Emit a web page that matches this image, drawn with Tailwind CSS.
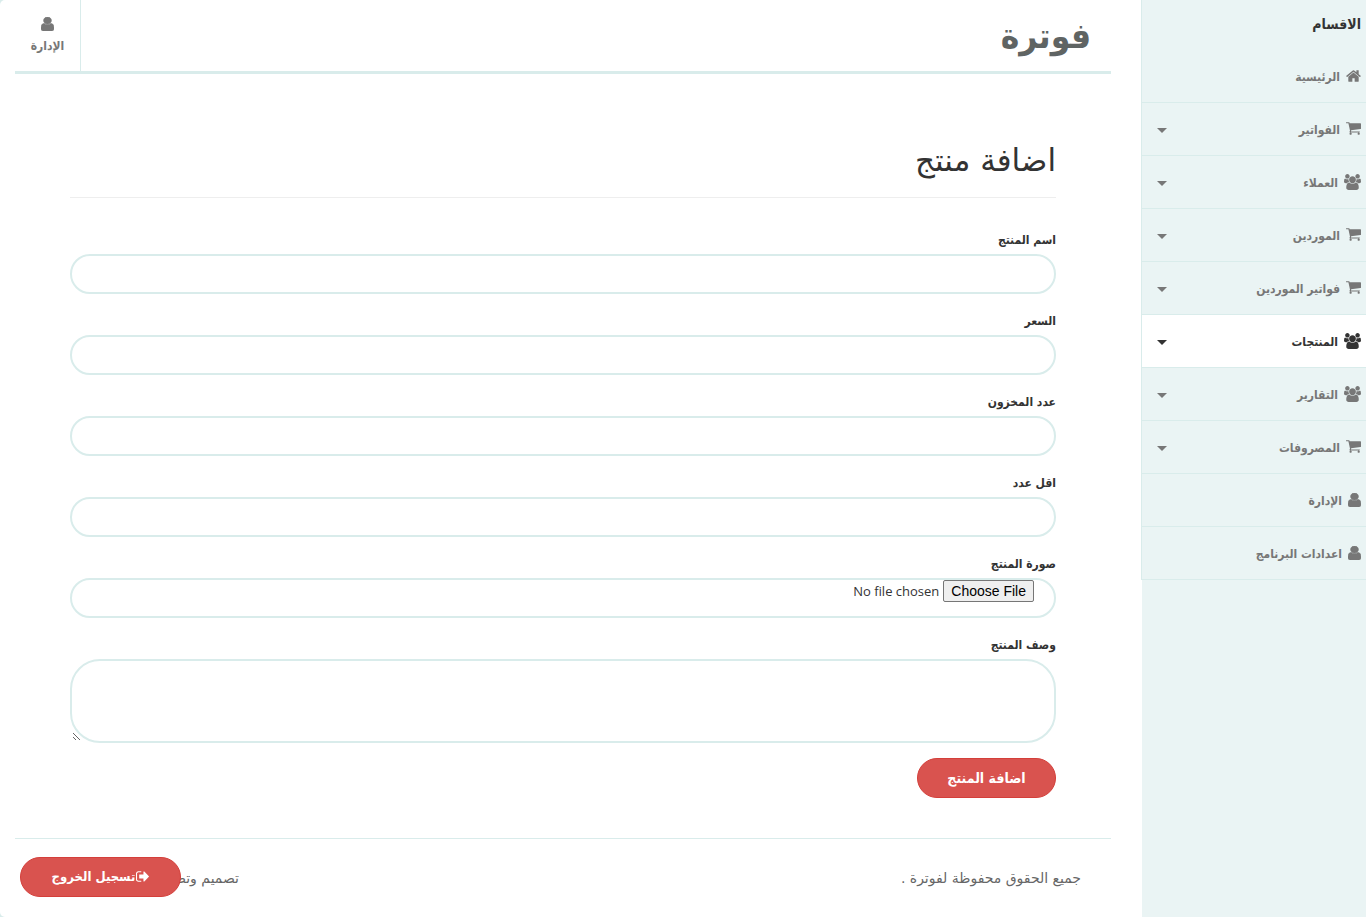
<!DOCTYPE html>
<html lang="ar" dir="rtl">
<head>
  <meta charset="UTF-8" />
  <meta name="viewport" content="width=device-width, initial-scale=1.0"/>
  <title>فوترة</title>
  <script src="https://cdn.jsdelivr.net/npm/@tailwindcss/browser@4"></script>
</head>
<body class="flex min-h-screen bg-[#d9eceb] font-['DejaVu_Sans_Condensed','DejaVu_Sans',sans-serif] text-[#333]">

  <!-- icon shapes shared by the menu and the header -->
  <svg class="hidden">
    <symbol id="home" viewBox="64 253 1664 1283"><path d="M1472 992v480q0 26-19 45t-45 19h-384v-384h-256v384h-384q-26 0-45-19t-19-45v-480q0-1 .5-3t.5-3l575-474 575 474q1 2 1 6zm223-69l-62 74q-8 9-21 11h-3q-13 0-21-7l-692-577-692 577q-12 8-24 7-13-2-21-11l-62-74q-8-10-7-23.5t11-21.5l719-599q32-26 76-26t76 26l244 204v-195q0-14 9-23t23-9h192q14 0 23 9t9 23v408l219 182q10 8 11 21.5t-7 23.5z"/></symbol>
    <symbol id="cart" viewBox="64 256 1664 1408"><path d="M704 1536q0 52-38 90t-90 38-90-38-38-90 38-90 90-38 90 38 38 90zm896 0q0 52-38 90t-90 38-90-38-38-90 38-90 90-38 90 38 38 90zm128-1088v512q0 24-16.5 42.5t-40.5 21.5l-1044 122q13 60 13 70 0 16-24 64h920q26 0 45 19t19 45-19 45-45 19h-1024q-26 0-45-19t-19-45q0-11 8-31.5t16-36 21.5-40 15.5-29.5l-177-823h-204q-26 0-45-19t-19-45 19-45 45-19h256q16 0 28.5 6.5t19.5 15.5 13 24.5 8 26 5.5 29.5 4.5 26h1201q26 0 45 19t19 45z"/></symbol>
    <symbol id="group" viewBox="-64 0 1920 1792"><path d="M529 896q-162 5-265 128h-134q-82 0-138-40.5t-56-118.5q0-353 124-353 6 0 43.5 21t97.5 42.5 119 21.5q67 0 133-23-5 37-5 66 0 139 81 256zm1071 637q0 120-73 189.5t-194 69.5h-874q-121 0-194-69.5t-73-189.5q0-53 3.5-103.5t14-109 26.5-108.5 43-97.5 62-81 85.5-53.5 111.5-20q10 0 43 21.5t73 48 107 48 135 21.5 135-21.5 107-48 73-48 43-21.5q61 0 111.5 20t85.5 53.5 62 81 43 97.5 26.5 108.5 14 109 3.5 103.5zm-1024-1277q0 106-75 181t-181 75-181-75-75-181 75-181 181-75 181 75 75 181zm704 384q0 159-112.5 271.5t-271.5 112.5-271.5-112.5-112.5-271.5 112.5-271.5 271.5-112.5 271.5 112.5 112.5 271.5zm576 225q0 78-56 118.5t-138 40.5h-134q-103-123-265-128 81-117 81-256 0-29-5-66 66 23 133 23 59 0 119-21.5t97.5-42.5 43.5-21q124 0 124 353zm-128-609q0 106-75 181t-181 75-181-75-75-181 75-181 181-75 181 75 75 181z"/></symbol>
    <symbol id="user" viewBox="256 128 1280 1536" preserveAspectRatio="none"><path stroke="currentColor" stroke-width="70" d="M1536 1399q0 109-62.5 187t-150.5 78h-854q-88 0-150.5-78t-62.5-187q0-85 8.5-160.5t31.5-152 58.5-131 94-89 134.5-34.5q131 128 313 128t313-128q76 0 134.5 34.5t94 89 58.5 131 31.5 152 8.5 160.5zm-256-887q0 159-112.5 271.5t-271.5 112.5-271.5-112.5-112.5-271.5 112.5-271.5 271.5-112.5 271.5 112.5 112.5 271.5z"/></symbol>
    <symbol id="signout" viewBox="64 256 1568 1280"><path d="M704 1440q0 4 1 20t.5 26.5-3 23.5-10 19.5-20.5 6.5h-320q-119 0-203.5-84.5t-84.5-203.5v-704q0-119 84.5-203.5t203.5-84.5h320q13 0 22.5 9.5t9.5 22.5q0 4 1 20t.5 26.5-3 23.5-10 19.5-20.5 6.5h-320q-66 0-113 47t-47 113v704q0 66 47 113t113 47h312l11.5 1 11.5 3 8 5.5 7 9 2 13.5zm928-544q0 26-19 45l-544 544q-19 19-45 19t-45-19-19-45v-288h-448q-26 0-45-19t-19-45v-384q0-26 19-45t45-19h448v-288q0-26 19-45t45-19 45 19l544 544q19 19 19 45z"/></symbol>
  </svg>

  <aside class="w-[225px] shrink-0 bg-[#eaf4f4] border-l border-white">
    <div class="-ml-px border-l border-[#d9eceb]">
      <h3 class="h-[50px] leading-[48px] px-[5px] text-sm font-bold">الاقسام</h3>
      <nav class="text-xs font-bold text-[#777]">
        <a href="#" class="flex items-center h-[53px] pt-0.5 pr-[5px] pl-[15px] gap-[6px] border-b border-[#d9eceb]">
          <svg class="w-[15px] h-3 mb-[3px] fill-current"><use href="#home"/></svg>الرئيسية
        </a>
        <a href="#" class="flex items-center h-[53px] pt-0.5 pr-[5px] pl-[15px] gap-[6px] border-b border-[#d9eceb]">
          <svg class="w-[15px] h-[13px] mb-[3px] fill-current"><use href="#cart"/></svg>الفواتير
          <span class="mr-auto border-x-5 border-t-5 border-x-transparent border-t-current"></span>
        </a>
        <a href="#" class="flex items-center h-[53px] pt-0.5 pr-[5px] pl-[15px] gap-[6px] border-b border-[#d9eceb]">
          <svg class="w-[17px] h-4 mb-[3px] fill-current"><use href="#group"/></svg>العملاء
          <span class="mr-auto border-x-5 border-t-5 border-x-transparent border-t-current"></span>
        </a>
        <a href="#" class="flex items-center h-[53px] pt-0.5 pr-[5px] pl-[15px] gap-[6px] border-b border-[#d9eceb]">
          <svg class="w-[15px] h-[13px] mb-[3px] fill-current"><use href="#cart"/></svg>الموردين
          <span class="mr-auto border-x-5 border-t-5 border-x-transparent border-t-current"></span>
        </a>
        <a href="#" class="flex items-center h-[53px] pt-0.5 pr-[5px] pl-[15px] gap-[6px] border-b border-[#d9eceb]">
          <svg class="w-[15px] h-[13px] mb-[3px] fill-current"><use href="#cart"/></svg>فواتير الموردين
          <span class="mr-auto border-x-5 border-t-5 border-x-transparent border-t-current"></span>
        </a>
        <a href="#" class="flex items-center h-[53px] pt-0.5 pr-[5px] pl-[15px] gap-[6px] border-b border-[#d9eceb] bg-white text-[#333]">
          <svg class="w-[17px] h-4 mb-[3px] fill-current"><use href="#group"/></svg>المنتجات
          <span class="mr-auto border-x-5 border-t-5 border-x-transparent border-t-current"></span>
        </a>
        <a href="#" class="flex items-center h-[53px] pt-0.5 pr-[5px] pl-[15px] gap-[6px] border-b border-[#d9eceb]">
          <svg class="w-[17px] h-4 mb-[3px] fill-current"><use href="#group"/></svg>التقارير
          <span class="mr-auto border-x-5 border-t-5 border-x-transparent border-t-current"></span>
        </a>
        <a href="#" class="flex items-center h-[53px] pt-0.5 pr-[5px] pl-[15px] gap-[6px] border-b border-[#d9eceb]">
          <svg class="w-[15px] h-[13px] mb-[3px] fill-current"><use href="#cart"/></svg>المصروفات
          <span class="mr-auto border-x-5 border-t-5 border-x-transparent border-t-current"></span>
        </a>
        <a href="#" class="flex items-center h-[53px] pt-0.5 pr-[5px] pl-[15px] gap-[6px] border-b border-[#d9eceb]">
          <svg class="w-[13px] h-[14px] mb-[3px] fill-current"><use href="#user"/></svg>الإدارة
        </a>
        <a href="#" class="flex items-center h-[53px] pt-0.5 pr-[5px] pl-[15px] gap-[6px] border-b border-[#d9eceb]">
          <svg class="w-[13px] h-[14px] mb-[3px] fill-current"><use href="#user"/></svg>اعدادات البرنامج
        </a>
      </nav>
    </div>
  </aside>

  <main class="relative flex-1 min-w-0 bg-white rounded-l-[5px] pr-[30px] pl-[15px]">
    <header class="flex justify-between h-[74px] border-b-3 border-[#d9eceb]">
      <a href="#" class="pr-5 pt-[14px] text-[35px] leading-[44px] font-bold text-[#5f6463]">فوترة</a>
      <a href="#" class="flex flex-col items-center w-[66px] pt-[17px] border-r border-[#d9eceb] text-xs font-bold text-[#777]">
        <svg class="w-[13px] h-[14px] fill-current"><use href="#user"/></svg>
        <span class="leading-[30px]">الإدارة</span>
      </a>
    </header>

    <section class="px-[55px] pt-[60px] pb-10">
      <h1 class="h-[64px] leading-[52px] text-[31px] font-['DejaVu_Sans',sans-serif] border-b border-[#eee]">اضافة منتج</h1>
      <form class="pt-[30px] text-xs">
        <div class="mb-[15px]">
          <label for="name" class="block h-[26px] leading-6 font-bold">اسم المنتج</label>
          <input id="name" type="text" class="block w-full h-10 px-5 border-2 border-[#d9eceb] rounded-[20px]">
        </div>
        <div class="mb-[15px]">
          <label for="price" class="block h-[26px] leading-6 font-bold">السعر</label>
          <input id="price" type="text" class="block w-full h-10 px-5 border-2 border-[#d9eceb] rounded-[20px]">
        </div>
        <div class="mb-[15px]">
          <label for="stock" class="block h-[26px] leading-6 font-bold">عدد المخزون</label>
          <input id="stock" type="text" class="block w-full h-10 px-5 border-2 border-[#d9eceb] rounded-[20px]">
        </div>
        <div class="mb-[15px]">
          <label for="min" class="block h-[26px] leading-6 font-bold">اقل عدد</label>
          <input id="min" type="text" class="block w-full h-10 px-5 border-2 border-[#d9eceb] rounded-[20px]">
        </div>
        <div class="mb-[15px]">
          <label for="image" class="block h-[26px] leading-6 font-bold">صورة المنتج</label>
          <input id="image" type="file" class="block w-full h-10 px-5 border-2 border-[#d9eceb] rounded-[20px] font-['Open_Sans',sans-serif] text-[13px] file:h-[22px] file:px-[7px] file:me-1 file:border file:border-solid file:border-[#767676] file:rounded-xs file:bg-[#efefef] file:text-black file:text-sm file:leading-5 file:font-['Liberation_Sans']">
        </div>
        <div class="mb-[15px]">
          <label for="desc" class="block h-[26px] leading-6 font-bold">وصف المنتج</label>
          <textarea id="desc" class="block w-full h-[84px] px-5 py-2 border-2 border-[#d9eceb] rounded-[30px] resize"></textarea>
        </div>
        <button type="submit" class="block w-[139px] h-10 bg-[#d9534f] border border-[#d43f3a] rounded-[20px] text-sm font-bold text-white">اضافة المنتج</button>
      </form>
    </section>

    <footer class="flex justify-between border-t border-[#d9eceb] pr-[30px] pt-7 text-sm leading-[22px] font-['DejaVu_Sans',sans-serif] text-[#666]">
      <p>جميع الحقوق محفوظة لفوترة .</p>
      <p class="w-[224px]">تصميم وتطوير</p>
    </footer>
    <button type="button" class="absolute left-5 bottom-5 flex items-center justify-center gap-px w-[161px] h-10 bg-[#d9534f] border border-[#d43f3a] rounded-[20px] text-[13px] font-bold text-white">
      <svg class="w-[13px] h-[11px] mb-0.5 fill-current"><use href="#signout"/></svg>تسجيل الخروج
    </button>
  </main>
</body>
</html>
